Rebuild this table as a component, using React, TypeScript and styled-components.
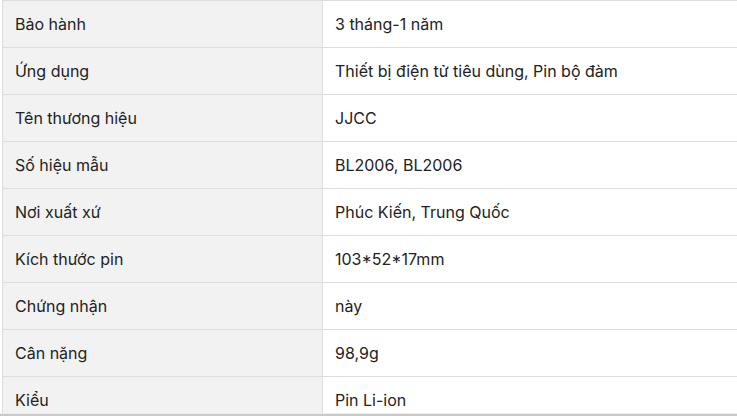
import React from 'react';
import styled, {createGlobalStyle} from 'styled-components';

const GlobalStyle = createGlobalStyle`
  html, body {
    margin: 0;
    padding: 0;
    background: #ffffff;
    overflow: hidden;
  }
  body {
    font-family: Inter, "Noto Sans", Arial, sans-serif;
  }
`;

const specs: Array<[string, string]> = [
  ['Bảo hành', '3 tháng-1 năm'],
  ['Ứng dụng', 'Thiết bị điện tử tiêu dùng, Pin bộ đàm'],
  ['Tên thương hiệu', 'JJCC'],
  ['Số hiệu mẫu', 'BL2006, BL2006'],
  ['Nơi xuất xứ', 'Phúc Kiến, Trung Quốc'],
  ['Kích thước pin', '103*52*17mm'],
  ['Chứng nhận', 'này'],
  ['Cân nặng', '98,9g'],
  ['Kiểu', 'Pin Li-ion'],
];

export default function App() {
  return (
    <>
      <GlobalStyle />
      <Page>
        <SpecTable>
          <tbody>
            {specs.map(([label, value]) => (
              <tr key={label}>
                <LabelCell>{label}</LabelCell>
                <ValueCell>{value}</ValueCell>
              </tr>
            ))}
          </tbody>
        </SpecTable>
      </Page>
      <BottomEdge />
    </>
  );
}

const Page = styled.div`
  padding-left: 2px;
  height: 416px;
  overflow: hidden;
`;

const SpecTable = styled.table`
  border-collapse: collapse;
  width: 780px;
  table-layout: fixed;
  font-size: 16px;
  color: #222;
`;

const Cell = styled.td`
  height: 46px;
  padding: 0 12px;
  border: 1px solid #dddddd;
  vertical-align: middle;
  white-space: nowrap;
`;

const LabelCell = styled(Cell)`
  width: 320px;
  box-sizing: border-box;
  background: #f2f2f2;
`;

const ValueCell = styled(Cell)`
  background: #ffffff;
`;

const BottomEdge = styled.div`
  position: fixed;
  left: 0;
  right: 0;
  bottom: 0;
  height: 2px;
  background: #c9c9c9;
  border-top: 1px solid #ececec;
`;
